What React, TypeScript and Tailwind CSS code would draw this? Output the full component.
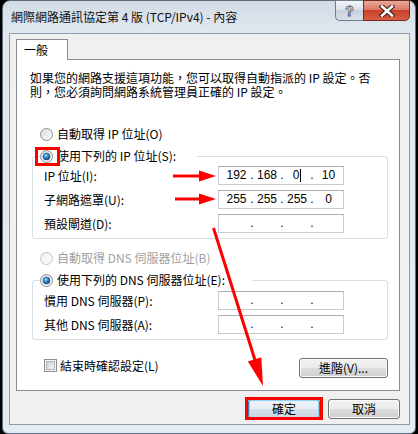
import { useId, type ReactNode } from "react";

function Radio({ checked, disabled }: { checked?: boolean; disabled?: boolean }) {
  const id = useId().replace(/:/g, "");
  return (
    <svg width="13" height="13" viewBox="0 0 13 13" className="shrink-0">
      <defs>
        <linearGradient id={`o${id}`} x1="0" y1="0" x2="1" y2="1">
          <stop offset="0" stopColor={disabled ? "#ececec" : "#d2d4d6"} />
          <stop offset="1" stopColor="#ffffff" />
        </linearGradient>
        <radialGradient id={`d${id}`} cx="0.4" cy="0.35" r="0.7">
          <stop offset="0" stopColor="#b8ecff" />
          <stop offset="0.35" stopColor="#3b9ad8" />
          <stop offset="1" stopColor="#0f3d73" />
        </radialGradient>
      </defs>
      <circle cx="6.5" cy="6.5" r="6" fill={`url(#o${id})`} stroke={disabled ? "#c2c4c6" : "#8c8f93"} />
      <circle cx="6.5" cy="6.5" r="4.4" fill="none" stroke={disabled ? "#f4f4f4" : "#f4f4f4"} strokeWidth="0.8" />
      {checked && <circle cx="6.5" cy="6.5" r="3.5" fill={`url(#d${id})`} stroke="#174b80" strokeWidth="0.6" />}
    </svg>
  );
}

function Checkbox() {
  const id = useId().replace(/:/g, "");
  return (
    <svg width="13" height="13" viewBox="0 0 13 13" className="shrink-0">
      <defs>
        <linearGradient id={`c${id}`} x1="0" y1="0" x2="1" y2="1">
          <stop offset="0" stopColor="#cbcfd5" />
          <stop offset="1" stopColor="#f7f7f7" />
        </linearGradient>
      </defs>
      <rect x="0.5" y="0.5" width="12" height="12" fill="#f6f6f6" stroke="#8e8f8f" />
      <rect x="2.5" y="2.5" width="8" height="8" fill={`url(#c${id})`} stroke="#aeb3b9" />
    </svg>
  );
}

function RadioOpt({ label, checked, disabled }: { label: string; checked?: boolean; disabled?: boolean }) {
  return (
    <div className="flex h-[16px] items-center gap-[4px] leading-[16px]">
      <Radio checked={checked} disabled={disabled} />
      <span className={disabled ? "text-[#9f9f9f]" : "text-black"}>{label}</span>
    </div>
  );
}

function IpField({ parts = ["", "", "", ""], caret }: { parts?: string[]; caret?: boolean }) {
  return (
    <div className="flex h-[19px] w-[126px] items-center border border-[#c6cad1] border-t-[#abadb3] bg-white font-['Liberation_Sans',sans-serif] text-[12px] leading-[17px] text-black">
      <span className="w-[31px] pl-[4px] text-center">{parts[0]}</span>
      <span className="w-[4px] text-center">.</span>
      <span className="w-[26px] text-center">{parts[1]}</span>
      <span className="w-[4px] text-center">.</span>
      <span className="flex w-[26px] items-center justify-center">
        {parts[2]}
        {caret && <span className="ml-[1px] h-[13px] w-px bg-black" />}
      </span>
      <span className="w-[4px] text-center">.</span>
      <span className="flex-1 text-center">{parts[3]}</span>
    </div>
  );
}

function FieldRow({ label, children }: { label: string; children: ReactNode }) {
  return (
    <div className="flex h-[19px] items-center">
      <span className="w-[178px] pl-[4px] leading-[16px]">{label}</span>
      {children}
    </div>
  );
}

function Btn({ children, width, primary }: { children: ReactNode; width: string; primary?: boolean }) {
  return (
    <div
      className={
        primary
          ? `flex h-[20px] ${width} items-center justify-center rounded-[3px] border border-[#3c7fb1] bg-[linear-gradient(#eef3f7_0%,#e6edf3_50%,#d6e0e9_50%,#c9d6e1_100%)] leading-[16px] shadow-[inset_0_0_0_1px_#8fd4f4]`
          : `flex h-[20px] ${width} items-center justify-center rounded-[3px] border border-[#707070] bg-[linear-gradient(#f2f2f2_0%,#ebebeb_50%,#dddddd_50%,#cfcfcf_100%)] leading-[16px] shadow-[inset_0_0_0_1px_#fbfbfb]`
      }
    >
      {children}
    </div>
  );
}

export default function App() {
  return (
    <div className="relative h-[434px] w-[418px] overflow-hidden bg-black font-['Noto_Sans_CJK_TC','Noto_Sans',sans-serif] text-[12px] text-black">
      <div className="ml-[2px] flex h-[434px] w-[414px] flex-col rounded-t-[8px] rounded-b-[6px] border border-[#5f6d7e] bg-[linear-gradient(180deg,#d3dce6_0px,#e0e7ef_32px,#e5ebf2_100%)] pb-[8px] pl-[6px] pr-[5px]">
        {/* title bar */}
        <div className="flex h-[32px] items-start justify-between">
          <span className="pl-[2px] pt-[7px] leading-[18px] text-[#111]">網際網路通訊協定第 4 版 (TCP/IPv4) - 內容</span>
          <div className="-mt-px flex">
            <div className="flex h-[21px] w-[28px] items-center justify-center rounded-bl-[5px] border border-r-0 border-[#707d8e] bg-[linear-gradient(#f2f5f8,#dbe2ea_45%,#c8d1dc_50%,#d9e0e8)]">
              <span className="font-['Liberation_Sans',sans-serif] text-[14px] leading-[16px] font-bold text-[#eef1f4] [-webkit-text-stroke:0.8px_#4a5566]">?</span>
            </div>
            <div className="flex h-[21px] w-[47px] items-center justify-center rounded-br-[5px] border border-[#6e2b22] bg-[linear-gradient(#eaa99b,#dc7a66_45%,#c8412c_50%,#da5d43)]">
              <svg width="16" height="12" viewBox="0 0 16 12">
                <path d="M3 1.5 L13 10.5 M13 1.5 L3 10.5" stroke="#3c1a14" strokeWidth="4.6" strokeLinecap="square" />
                <path d="M3 1.5 L13 10.5 M13 1.5 L3 10.5" stroke="#ffffff" strokeWidth="2.6" strokeLinecap="square" />
              </svg>
            </div>
          </div>
        </div>

        {/* client area */}
        <div className="flex flex-1 flex-col border border-[#8f9bab] bg-[#f0f0f0] pl-[6px] pr-[9px] pt-[5px]">
          <div className="relative z-10 -mb-px flex h-[21px] w-[52px] items-center border border-b-0 border-[#898c95] bg-white pl-[7px] leading-[16px]">
            一般
          </div>
          <div className="flex flex-col border border-[#898c95] bg-white">
            <p className="ml-[13px] mt-[11px] leading-[14px]">
              如果您的網路支援這項功能，您可以取得自動指派的 IP 設定。否
              <br />
              則，您必須詢問網路系統管理員正確的 IP 設定。
            </p>
            <div className="ml-[23px] mt-[27px]">
              <RadioOpt label="自動取得 IP 位址(O)" />
            </div>
            <fieldset className="ml-[15px] mt-[6px] w-[356px] rounded-[3px] border border-[#d5dfe5] pb-[5px] pl-[7px] pt-[2px]">
              <legend className="w-[157px]">
                <RadioOpt label="使用下列的 IP 位址(S):" checked />
              </legend>
              <div className="flex flex-col gap-[5px]">
                <FieldRow label="IP 位址(I):">
                  <IpField parts={["192", "168", "0", "10"]} caret />
                </FieldRow>
                <FieldRow label="子網路遮罩(U):">
                  <IpField parts={["255", "255", "255", "0"]} />
                </FieldRow>
                <FieldRow label="預設閘道(D):">
                  <IpField />
                </FieldRow>
              </div>
            </fieldset>
            <div className="ml-[23px] mt-[11px]">
              <RadioOpt label="自動取得 DNS 伺服器位址(B)" disabled />
            </div>
            <fieldset className="ml-[15px] mt-[6px] w-[356px] rounded-[3px] border border-[#d5dfe5] pb-[5px] pl-[7px] pt-[3px]">
              <legend className="w-[212px]">
                <RadioOpt label="使用下列的 DNS 伺服器位址(E):" checked />
              </legend>
              <div className="flex flex-col gap-[5px]">
                <FieldRow label="慣用 DNS 伺服器(P):">
                  <IpField />
                </FieldRow>
                <FieldRow label="其他 DNS 伺服器(A):">
                  <IpField />
                </FieldRow>
              </div>
            </fieldset>
            <div className="mb-[12px] ml-[27px] mr-[11px] mt-[18px] flex items-start justify-between">
              <div className="mt-[1px] flex h-[13px] items-center gap-[3px] leading-[13px]">
                <Checkbox />
                <span>結束時確認設定(L)</span>
              </div>
              <Btn width="w-[89px]">進階(V)...</Btn>
            </div>
          </div>
          <div className="mb-[5px] mt-[8px] flex justify-end gap-[8px]">
            <Btn width="w-[72px]" primary>
              確定
            </Btn>
            <Btn width="w-[72px]">取消</Btn>
          </div>
        </div>
      </div>

      {/* red annotations */}
      <svg className="pointer-events-none absolute left-0 top-0" width="418" height="434" viewBox="0 0 418 434">
        <rect x="36.5" y="148.5" width="22" height="16" fill="none" stroke="#ff0000" strokeWidth="3" />
        <rect x="246.5" y="398.5" width="75" height="20" fill="none" stroke="#ff0000" strokeWidth="3" />
        <line x1="173" y1="176" x2="202" y2="176" stroke="#ff0000" strokeWidth="3" />
        <polygon points="199,170.5 216,176 199,181.5" fill="#ff0000" />
        <line x1="175" y1="199" x2="202" y2="199" stroke="#ff0000" strokeWidth="3" />
        <polygon points="199,193.5 216,199 199,204.5" fill="#ff0000" />
        <line x1="213.5" y1="228" x2="255" y2="360" stroke="#ff0000" strokeWidth="3" />
        <polygon points="263,386 261.3,357.2 247.9,361.4" fill="#ff0000" />
      </svg>
    </div>
  );
}
